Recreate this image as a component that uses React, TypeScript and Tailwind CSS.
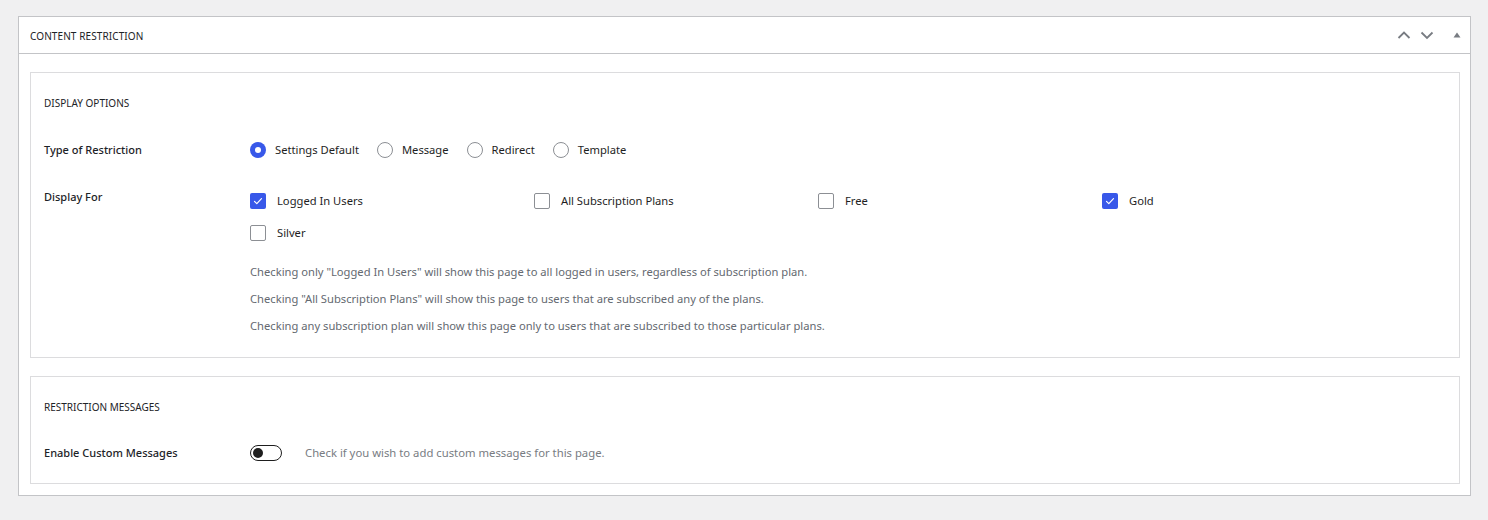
import React, { useState } from 'react';

const FONT = { fontFamily: '"Noto Sans", "Open Sans", Arial, sans-serif' };

const Radio: React.FC<{ checked: boolean; label: string; onClick: () => void }> = ({ checked, label, onClick }) => (
    <label className="flex items-center h-5 mr-[18px] cursor-pointer" onClick={onClick}>
        {checked ? (
            <span className="w-4 h-4 rounded-full bg-[#3858e9] flex items-center justify-center">
                <span className="w-[6px] h-[6px] rounded-full bg-white" />
            </span>
        ) : (
            <span className="w-4 h-4 rounded-full border border-[#8c8f94] bg-white" />
        )}
        <span className="ml-[9px] text-[11.2px] text-[#1e1e1e]">{label}</span>
    </label>
);

const Checkbox: React.FC<{ checked: boolean; label: string; onClick: () => void }> = ({ checked, label, onClick }) => (
    <label className="flex items-center h-5 cursor-pointer" onClick={onClick}>
        {checked ? (
            <span className="w-4 h-4 rounded-[2px] bg-[#3858e9] flex items-center justify-center">
                <svg viewBox="0 0 16 16" className="w-4 h-4" fill="none">
                    <path d="M4.5 8.3l2.3 2.3 4.7-5" stroke="white" strokeWidth="1.2" strokeLinecap="round" strokeLinejoin="round" />
                </svg>
            </span>
        ) : (
            <span className="w-4 h-4 rounded-[2px] border border-[#8c8f94] bg-white" />
        )}
        <span className="ml-[11px] text-[11.2px] text-[#1e1e1e]">{label}</span>
    </label>
);

export default function App() {
    const [restriction, setRestriction] = useState('default');
    const [plans, setPlans] = useState<Record<string, boolean>>({
        logged: true, all: false, free: false, gold: true, silver: false,
    });
    const [custom, setCustom] = useState(false);

    const toggle = (key: string) => setPlans(p => ({ ...p, [key]: !p[key] }));

    const planList = [
        { key: 'logged', label: 'Logged In Users' },
        { key: 'all', label: 'All Subscription Plans' },
        { key: 'free', label: 'Free' },
        { key: 'gold', label: 'Gold' },
        { key: 'silver', label: 'Silver' },
    ];

    return (
        <div className="min-h-[520px] bg-[#f0f0f1] pt-4 pl-[18px] pr-[17px]" style={FONT}>
            <div className="border border-[#c3c4c7] bg-white">
                {/* header */}
                <div className="h-[37px] border-b border-[#c3c4c7] flex items-center justify-between pl-[11px] pr-[9px]">
                    <h2 className="text-[10px] leading-[14px] pt-[2px] uppercase text-[#1d2327] tracking-[0.1px]">Content Restriction</h2>
                    <div className="flex items-center text-[#787c82]">
                        <svg viewBox="0 0 14 10" className="w-[14px] h-[10px]" fill="none" stroke="currentColor" strokeWidth="1.8">
                            <path d="M1.5 8l5.5-5.5 5.5 5.5" />
                        </svg>
                        <svg viewBox="0 0 14 10" className="w-[14px] h-[10px] ml-[9px]" fill="none" stroke="currentColor" strokeWidth="1.8">
                            <path d="M1.5 2.5l5.5 5.5 5.5-5.5" />
                        </svg>
                        <svg viewBox="0 0 8 10" className="w-[8px] h-[10px] ml-[19px]" fill="currentColor">
                            <path d="M0.5 7.5l3.5-5 3.5 5z" />
                        </svg>
                    </div>
                </div>

                <div className="pl-[11px] pr-[10px] pt-[18px] pb-[11px]">
                    {/* display options */}
                    <div className="border border-[#dcdcde] px-[13px] pt-[23px] pb-[21px]">
                        <h3 className="text-[10px] leading-[14px] uppercase text-[#1d2327]">Display Options</h3>

                        <div className="flex mt-[30px]">
                            <div className="w-[206px] text-[11px] leading-5 font-medium text-[#1d2327]">Type of Restriction</div>
                            <div className="flex">
                                <Radio checked={restriction === 'default'} label="Settings Default" onClick={() => setRestriction('default')} />
                                <Radio checked={restriction === 'message'} label="Message" onClick={() => setRestriction('message')} />
                                <Radio checked={restriction === 'redirect'} label="Redirect" onClick={() => setRestriction('redirect')} />
                                <Radio checked={restriction === 'template'} label="Template" onClick={() => setRestriction('template')} />
                            </div>
                        </div>

                        <div className="flex mt-[27px]">
                            <div className="w-[206px] text-[11px] leading-5 font-medium text-[#1d2327]">Display For</div>
                            <div className="flex-1 pt-1">
                                <div className="grid grid-cols-[284px_284px_284px_284px] gap-y-3">
                                    {planList.map(p => (
                                        <Checkbox key={p.key} checked={plans[p.key]} label={p.label} onClick={() => toggle(p.key)} />
                                    ))}
                                </div>
                                <div className="mt-[19px] flex flex-col gap-[7px] text-[11.2px] leading-5 text-[#646970]">
                                    <p>Checking only "Logged In Users" will show this page to all logged in users, regardless of subscription plan.</p>
                                    <p>Checking "All Subscription Plans" will show this page to users that are subscribed any of the plans.</p>
                                    <p>Checking any subscription plan will show this page only to users that are subscribed to those particular plans.</p>
                                </div>
                            </div>
                        </div>
                    </div>

                    {/* restriction messages */}
                    <div className="mt-[18px] border border-[#dcdcde] px-[13px] pt-[23px] pb-[20px]">
                        <h3 className="text-[10px] leading-[14px] uppercase text-[#1d2327]">Restriction Messages</h3>
                        <div className="flex items-center mt-[29px] h-5">
                            <div className="w-[206px] text-[11px] leading-5 font-medium text-[#1d2327]">Enable Custom Messages</div>
                            <button
                                onClick={() => setCustom(!custom)}
                                className={`w-8 h-4 rounded-full border border-[#1e1e1e] flex items-center px-[2px] ${custom ? 'bg-[#3858e9] justify-end border-[#3858e9]' : 'bg-white justify-start'}`}
                            >
                                <span className={`w-[10px] h-[10px] rounded-full ${custom ? 'bg-white' : 'bg-[#1e1e1e]'}`} />
                            </button>
                            <span className="ml-[23px] text-[11.3px] text-[#787c82]">Check if you wish to add custom messages for this page.</span>
                        </div>
                    </div>
                </div>
            </div>
        </div>
    );
}
